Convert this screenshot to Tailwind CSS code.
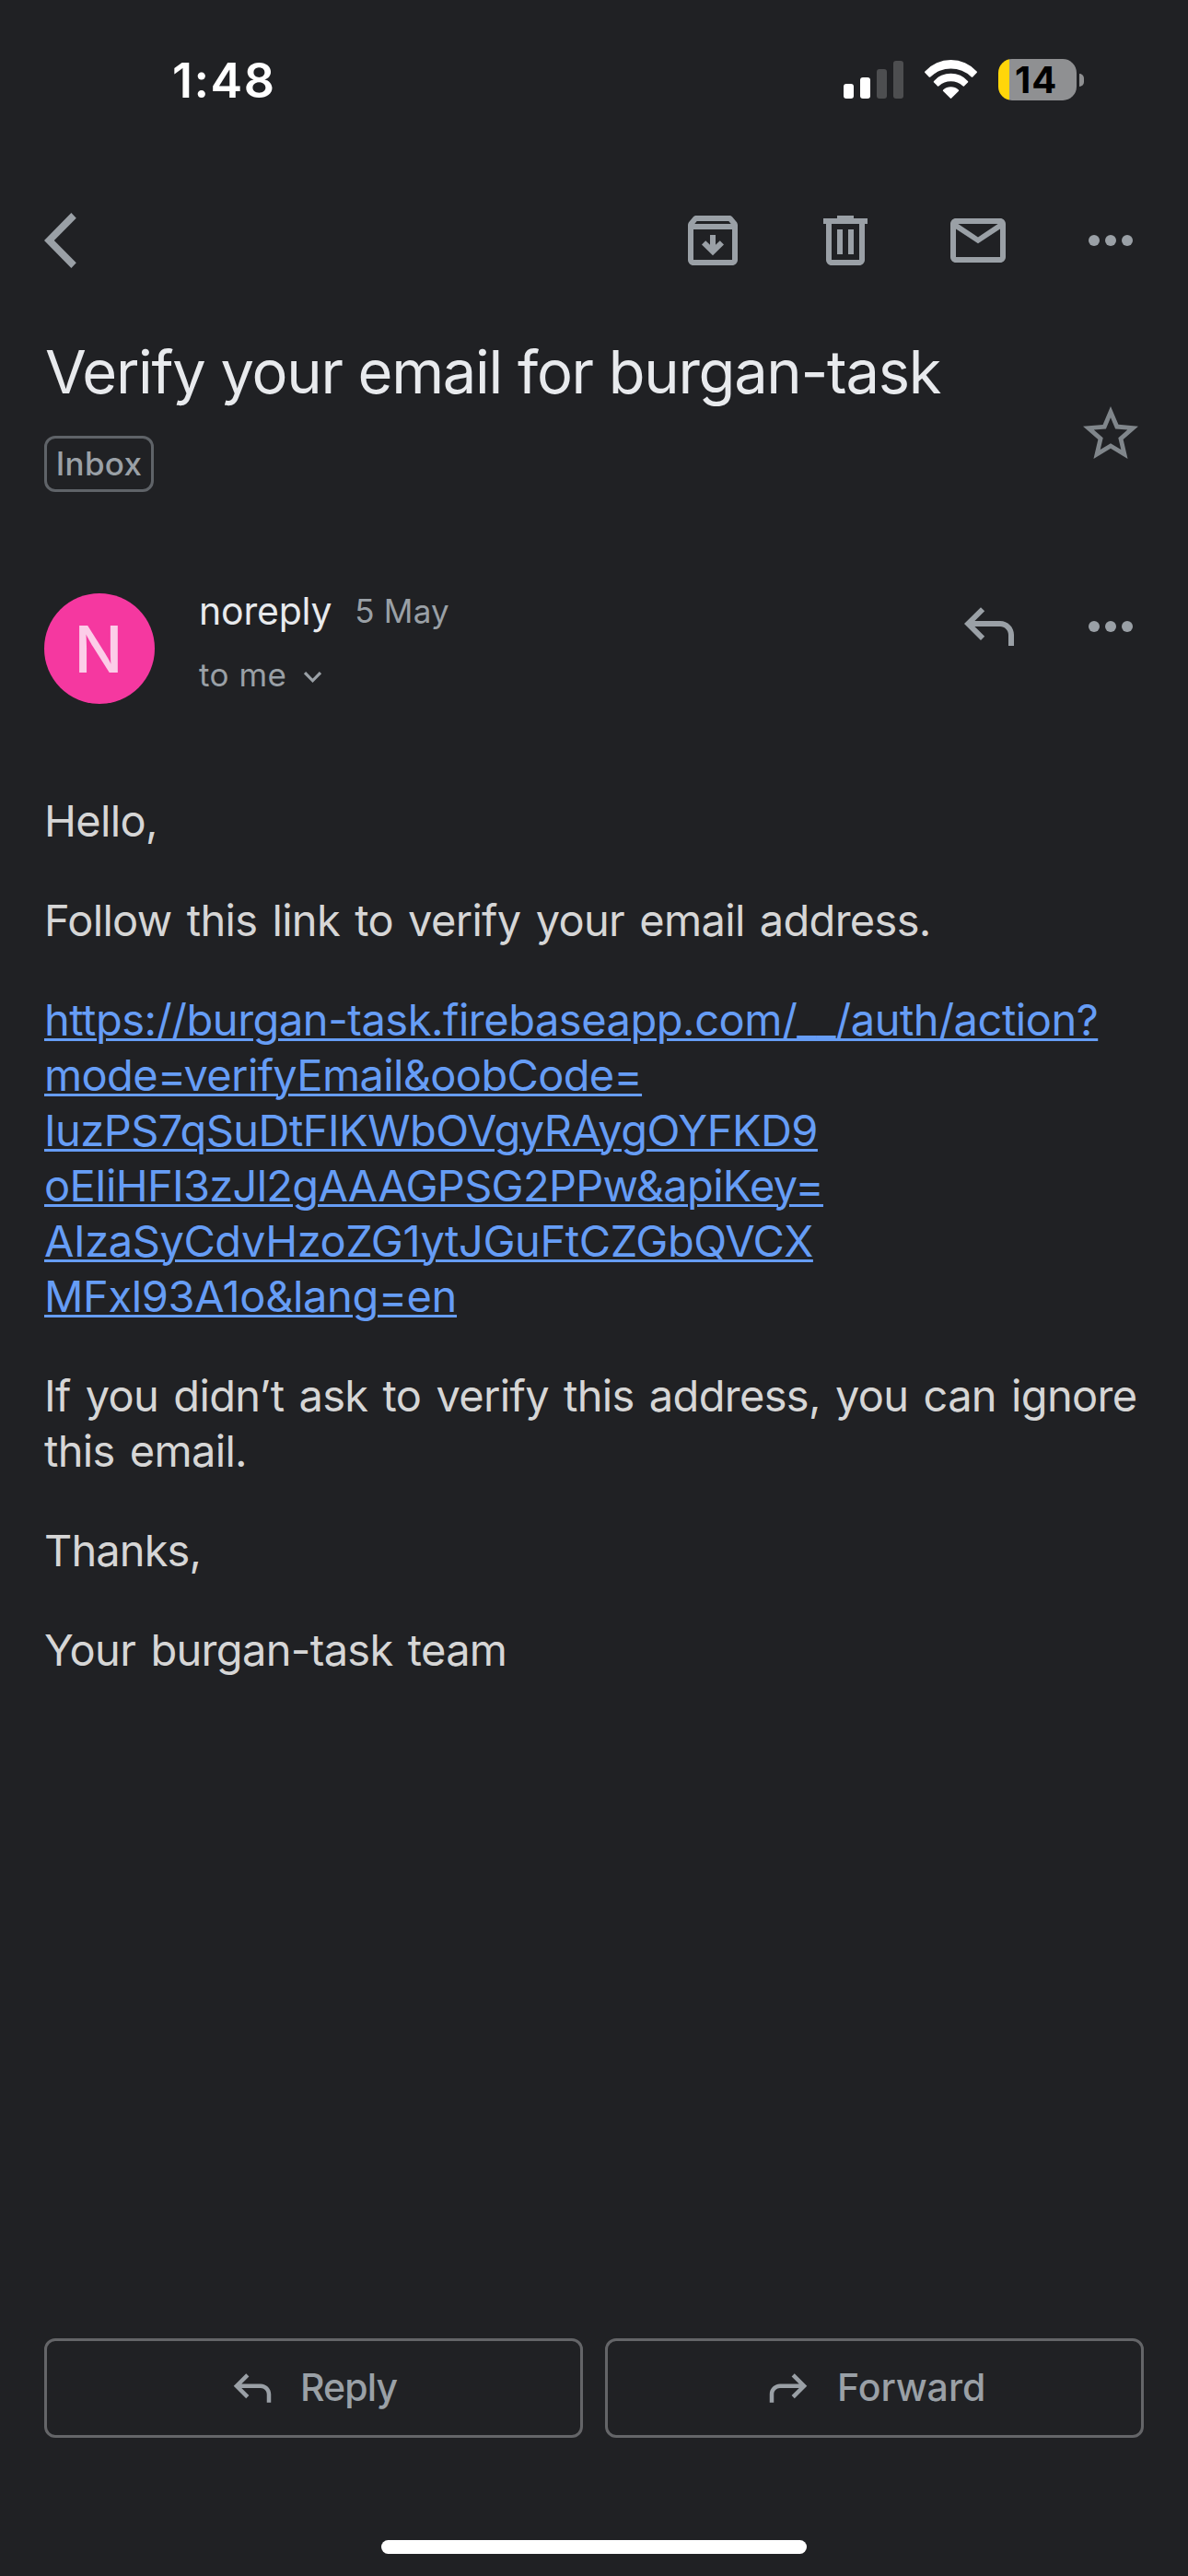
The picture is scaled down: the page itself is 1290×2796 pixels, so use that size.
<!DOCTYPE html>
<html lang="en">
<head>
<meta charset="utf-8">
<title>Verify your email for burgan-task</title>
<script src="https://cdn.jsdelivr.net/npm/@tailwindcss/browser@4"></script>
</head>
<body class="bg-[#202124]">
<div class="w-[1290px] h-[2796px] flex flex-col bg-[#202124] font-['Inter',sans-serif] text-[#9aa0a6] overflow-hidden">

  <!-- Status bar -->
  <header class="h-[225px] shrink-0 flex items-start justify-between pl-[187px] pr-[113px] pt-[58px]">
    <div class="text-[52px] leading-[60px] font-semibold tracking-[1.5px] text-white">1:48</div>
    <div class="flex items-start pt-[6px]">
      <div class="flex items-end gap-[7px] h-[43px]">
        <div class="w-[11px] h-[16px] rounded-[3px] bg-white"></div>
        <div class="w-[11px] h-[23px] rounded-[3px] bg-white"></div>
        <div class="w-[11px] h-[32px] rounded-[3px] bg-[#4d4e50]"></div>
        <div class="w-[11px] h-[41px] rounded-[3px] bg-[#4d4e50]"></div>
      </div>
      <svg class="ml-[23px] mt-px w-[57px] h-[42px]" viewBox="0 0 57 42" fill="#fff">
        <path d="M.4 12.5A38 38 0 0 1 56.6 12.5Q57.3 13.2 56.6 14L52.3 18.4Q51.5 19.1 50.7 18.4A32 32 0 0 0 6.3 18.4Q5.5 19.1 4.7 18.4L.4 14Q-.3 13.2 .4 12.5z"/>
        <path d="M10.1 23A24.5 24.5 0 0 1 46.9 23Q47.7 23.8 46.9 24.6L42.9 28.4Q42.2 29 41.4 28.3A19 19 0 0 0 15.6 28.3Q14.8 29 14.1 28.4L10.1 24.6Q9.3 23.8 10.1 23z"/>
        <path d="M20.2 32.4A12.5 12.5 0 0 1 36.8 32.4Q37.6 33.2 36.8 34L29.2 41.6Q28.5 42.3 27.8 41.6L20.2 34Q19.4 33.2 20.2 32.4z"/>
      </svg>
      <div class="ml-[23px] w-[85px] h-[45px] rounded-[15px] pl-[18px] bg-[linear-gradient(to_right,#ffd60a_12px,#8f9092_12px)] text-[40px] leading-[45px] font-bold tracking-[1px] text-black">14</div>
      <div class="ml-[3px] mt-[15.5px] w-[5px] h-[14px] rounded-r-full bg-[#8f9092]"></div>
    </div>
  </header>

  <!-- Toolbar -->
  <nav class="h-[72px] shrink-0 flex items-center justify-between px-[48px]">
    <svg class="w-[36px] h-[60px]" viewBox="0 0 36 60" fill="#9aa0a6"><path d="M29.4 0L34.8 5.7 10.8 30 34.8 54.3 29.4 60 0 30z"/></svg>
    <div class="flex gap-[72px]">
      <svg class="size-[72px]" viewBox="0 0 24 24" fill="#9aa0a6"><path d="M20.54 5.23l-1.39-1.68C18.88 3.21 18.47 3 18 3H6c-.47 0-.88.21-1.16.55L3.46 5.23C3.17 5.57 3 6.02 3 6.5V19c0 1.1.9 2 2 2h14c1.1 0 2-.9 2-2V6.5c0-.48-.17-.93-.46-1.27zM6.24 5h11.52l.83 1H5.42l.82-1zM5 19V8h14v11H5z"/><path d="M11 10h2v3.6l1.6-1.5 1.4 1.4-4 3.9-4-3.9 1.4-1.4 1.6 1.5z"/></svg>
      <svg class="size-[72px]" viewBox="0 0 24 24" fill="#9aa0a6"><path fill-rule="evenodd" d="M9 3h6v1h5v2h-1v13c0 1.1-.9 2-2 2H7c-1.1 0-2-.9-2-2V6H4V4h5zM7 6v13h10V6z"/><path d="M9 8h2v9H9zM13 8h2v9h-2z"/></svg>
      <svg class="size-[72px]" viewBox="0 0 24 24" fill="#9aa0a6"><path fill-rule="evenodd" d="M4 4h16c1.1 0 2 .9 2 2v12c0 1.1-.9 2-2 2H4c-1.1 0-2-.9-2-2V6c0-1.1.9-2 2-2zM4.8 6L12 10.8 19.2 6zM4 7.8V18h16V7.8L12 13.1z"/></svg>
      <svg class="size-[72px]" viewBox="0 0 24 24" fill="#9aa0a6"><circle cx="6" cy="12" r="2"/><circle cx="12" cy="12" r="2"/><circle cx="18" cy="12" r="2"/></svg>
    </div>
  </nav>

  <!-- Subject -->
  <section class="shrink-0 flex justify-between pl-[48px] pr-[48px] pt-[65px]">
    <div>
      <h1 class="pt-[2px] pl-px text-[65px] leading-[80px] tracking-[-1.28px] text-[#e8eaed] whitespace-nowrap">Verify your email for burgan-task</h1>
      <div class="mt-[29px] w-[119px] h-[61px] border-3 border-[#5f6368] rounded-[12px] flex items-center justify-center text-[35px] leading-[55px] font-medium tracking-[0.3px]">Inbox</div>
    </div>
    <svg class="mt-[73px] size-[72px]" viewBox="0 0 24 24" fill="#80868b"><path d="M22 9.24l-7.19-.62L12 2 9.19 8.63 2 9.24l5.46 4.73L5.82 21 12 17.27 18.18 21l-1.63-7.03L22 9.24zM12 15.4l-3.76 2.27 1-4.28-3.32-2.88 4.38-.38L12 6.1l1.71 4.04 4.38.38-3.32 2.88 1 4.28L12 15.4z"/></svg>
  </section>

  <!-- Sender -->
  <section class="shrink-0 flex items-start px-[48px] pt-[104px]">
    <div class="mt-[6px] size-[120px] rounded-full bg-[#f538a0] flex items-center justify-center text-[70px] font-medium text-[#fccde8]"><span class="pr-[2px]">N</span></div>
    <div class="ml-[48px] flex-1">
      <div class="flex items-start gap-[25px] leading-[50px]">
        <span class="text-[41px] leading-[50px] tracking-[-0.2px] text-[#e8eaed]">noreply</span>
        <span class="text-[35px] leading-[50px] tracking-[0.2px]">5 May</span>
      </div>
      <div class="mt-[19px] flex items-center gap-[15px]">
        <span class="text-[35px] leading-[50px] tracking-[0.5px]">to me</span>
        <svg class="mt-[6px] w-[25px] h-[18px]" viewBox="0 0 25 18" fill="none" stroke="#9aa0a6" stroke-width="3.2"><path d="M4 4.2l8.5 8.6L21 4.2"/></svg>
      </div>
    </div>
    <div class="mt-[6px] flex gap-[60px]">
      <svg class="size-[72px]" viewBox="0 0 24 24" fill="#9aa0a6"><path d="M10.4 6.45L9 5.05 3 11l6 6 1.4-1.4L6.8 12H16c1.66 0 3 1.34 3 3v4h2v-4c0-2.76-2.24-5-5-5H6.8z"/></svg>
      <svg class="size-[72px]" viewBox="0 0 24 24" fill="#9aa0a6"><circle cx="6" cy="12" r="2"/><circle cx="12" cy="12" r="2"/><circle cx="18" cy="12" r="2"/></svg>
    </div>
  </section>

  <!-- Message body -->
  <article class="flex-1 flex flex-col gap-[48px] pl-[48px] pt-[97px] text-[47px] leading-[60px] tracking-[-0.68px] [word-spacing:3.6px] text-[#d6d6d6] whitespace-nowrap">
    <p>Hello,</p>
    <p>Follow this link to verify your email address.</p>
    <a class="text-[#669df6] underline decoration-[3px] underline-offset-[3px]"><span class="tracking-[-0.48px]">https://burgan-task.firebaseapp.com/__/auth/action?</span><br><span class="tracking-[-0.65px]">mode=verifyEmail&amp;oobCode=</span><br><span class="tracking-[-0.54px]">IuzPS7qSuDtFIKWbOVgyRAygOYFKD9</span><br><span class="tracking-[-0.69px]">oEIiHFI3zJl2gAAAGPSG2PPw&amp;apiKey=</span><br><span class="tracking-[-0.42px]">AIzaSyCdvHzoZG1ytJGuFtCZGbQVCX</span><br><span class="tracking-[-0.38px]">MFxl93A1o&amp;lang=en</span></a>
    <p>If you didn’t ask to verify this address, you can ignore<br>this email.</p>
    <p class="tracking-[-0.9px]">Thanks,</p>
    <p>Your burgan-task team</p>
  </article>

  <!-- Reply / forward -->
  <footer class="shrink-0">
    <div class="flex gap-[24px] px-[48px] font-medium text-[41px] leading-[50px]">
      <div class="w-[585px] h-[108px] border-3 border-[#646568] rounded-[12px] flex items-center gap-[25px] pl-[196px]">
        <svg class="size-[54px]" viewBox="0 0 24 24" fill="#9aa0a6"><path d="M10.4 6.45L9 5.05 3 11l6 6 1.4-1.4L6.8 12H16c1.66 0 3 1.34 3 3v4h2v-4c0-2.76-2.24-5-5-5H6.8z"/></svg>
        <span class="pb-[2px] tracking-[-0.9px]">Reply</span>
      </div>
      <div class="w-[585px] h-[108px] border-3 border-[#646568] rounded-[12px] flex items-center gap-[26px] pl-[169px]">
        <svg class="size-[54px]" viewBox="0 0 24 24" fill="#9aa0a6"><path d="M13.6 6.45L15 5.05 21 11l-6 6-1.4-1.4 3.6-3.6H8c-1.66 0-3 1.34-3 3v4H3v-4c0-2.76 2.24-5 5-5h9.2z"/></svg>
        <span class="pb-[2px]">Forward</span>
      </div>
    </div>
    <div class="mt-[111px] mb-[24px] mx-auto w-[462px] h-[15px] rounded-full bg-white"></div>
  </footer>
</div>
</body>
</html>
